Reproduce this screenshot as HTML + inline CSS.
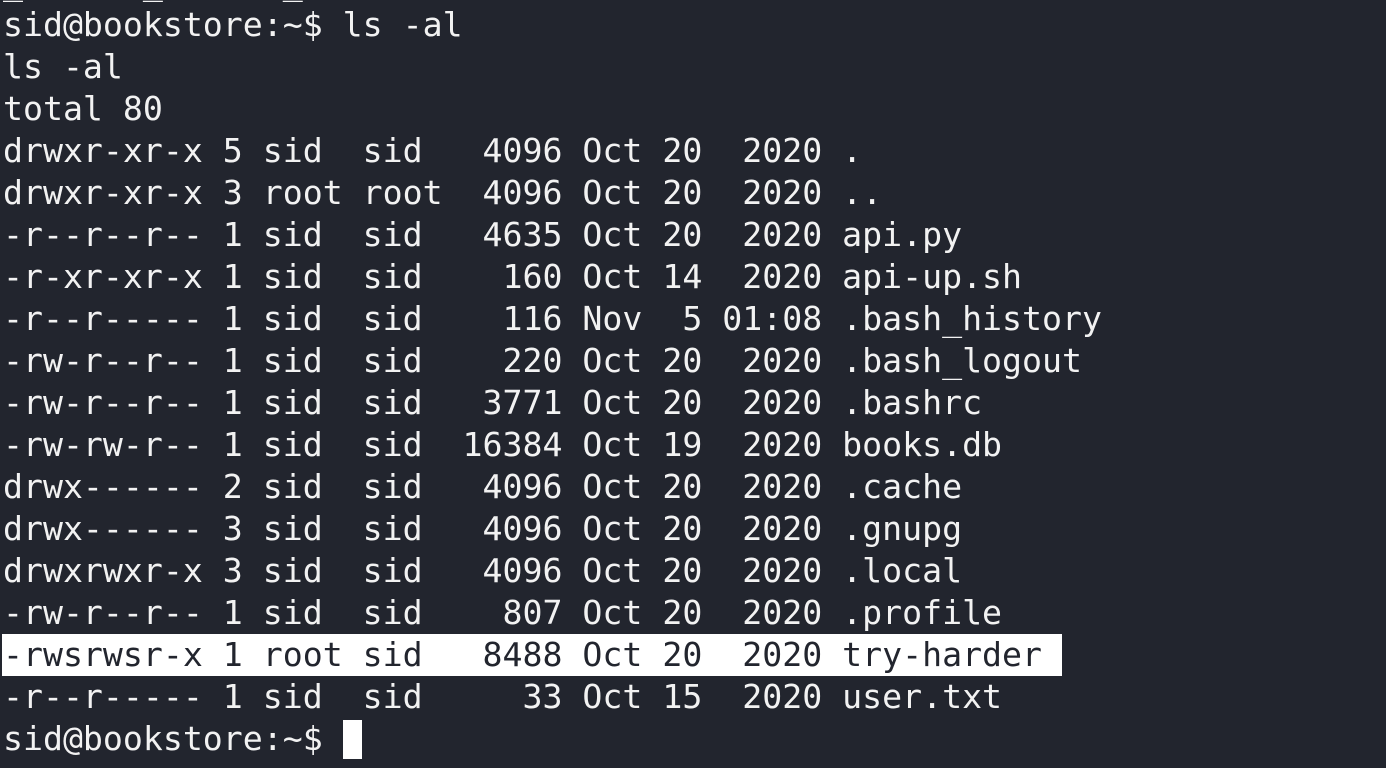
<!DOCTYPE html>
<html><head><style>
html,body{margin:0;padding:0;background:#22252e;width:1386px;height:768px;overflow:hidden}
pre{margin:0;position:absolute;left:3px;top:-38px;font-family:"DejaVu Sans Mono","Liberation Mono",monospace;font-size:33.2px;line-height:42px;color:#f2f2f2;white-space:pre}
.hl{background:#ffffff;color:#22252e;display:inline-block;width:1059px;margin-left:-1px;padding-left:1px}
.cur{display:inline-block;width:19px;height:39px;background:#fff;vertical-align:-9px}
</style></head><body>
<pre>_      _      _
sid@bookstore:~$ ls -al
ls -al
total 80
drwxr-xr-x 5 sid  sid   4096 Oct 20  2020 .
drwxr-xr-x 3 root root  4096 Oct 20  2020 ..
-r--r--r-- 1 sid  sid   4635 Oct 20  2020 api.py
-r-xr-xr-x 1 sid  sid    160 Oct 14  2020 api-up.sh
-r--r----- 1 sid  sid    116 Nov  5 01:08 .bash_history
-rw-r--r-- 1 sid  sid    220 Oct 20  2020 .bash_logout
-rw-r--r-- 1 sid  sid   3771 Oct 20  2020 .bashrc
-rw-rw-r-- 1 sid  sid  16384 Oct 19  2020 books.db
drwx------ 2 sid  sid   4096 Oct 20  2020 .cache
drwx------ 3 sid  sid   4096 Oct 20  2020 .gnupg
drwxrwxr-x 3 sid  sid   4096 Oct 20  2020 .local
-rw-r--r-- 1 sid  sid    807 Oct 20  2020 .profile
<span class="hl">-rwsrwsr-x 1 root sid   8488 Oct 20  2020 try-harder</span>
-r--r----- 1 sid  sid     33 Oct 15  2020 user.txt
sid@bookstore:~$ <span class="cur"></span></pre>
</body></html>
